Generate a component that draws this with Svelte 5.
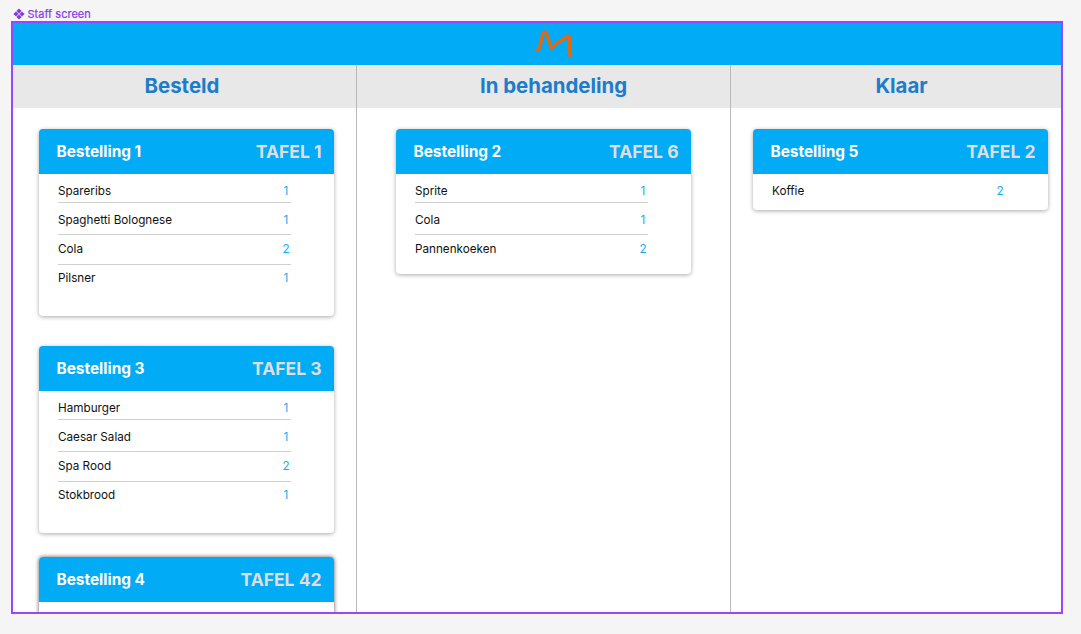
<script>
  const columns = [
    {
      title: 'Besteld',
      orders: [
        { id: 1, table: 1, height: 187, items: [['Spareribs', 1], ['Spaghetti Bolognese', 1], ['Cola', 2], ['Pilsner', 1]] },
        { id: 3, table: 3, height: 187, items: [['Hamburger', 1], ['Caesar Salad', 1], ['Spa Rood', 2], ['Stokbrood', 1]] },
        { id: 4, table: 42, height: 187, items: [], raised: true }
      ]
    },
    {
      title: 'In behandeling',
      orders: [{ id: 2, table: 6, height: 145, items: [['Sprite', 1], ['Cola', 1], ['Pannenkoeken', 2]] }]
    },
    {
      title: 'Klaar',
      orders: [{ id: 5, table: 2, height: 81, items: [['Koffie', 2]] }]
    }
  ];
</script>

<main>
  <div class="label">
    <svg width="12" height="12" viewBox="0 0 12 12" aria-hidden="true">
      <path d="M6 .4 8.6 3 6 5.6 3.4 3zM9 3.4 11.6 6 9 8.6 6.4 6zM6 6.4 8.6 9 6 11.6 3.4 9zM3 3.4 5.6 6 3 8.6.4 6z" fill="#8638e5" />
    </svg>
    <span>Staff screen</span>
  </div>
  <div class="screen">
    <header>
      <svg width="40" height="30" viewBox="0 0 40 30" aria-hidden="true">
        <path d="M2.2 22.5Q4.2 22.4 4.9 21Q7.4 15 8.2 8Q9 3.6 10.8 3.8Q12.4 4 13.2 7.5Q14.4 11 15.8 15L17.5 20.2Q20 18 23.6 14.9Q29 11.5 33.2 8.4Q35.6 7 35.6 10.7Q35 16 35.5 20.7L36 27.8" fill="none" stroke="#eb6608" stroke-width="3.2" stroke-linecap="round" stroke-linejoin="round" />
      </svg>
    </header>
    <div class="board">
      {#each columns as column}
        <section>
          <h2>{column.title}</h2>
          <div class="orders">
            {#each column.orders as order}
              <article class:raised={order.raised} style:height="{order.height}px">
                <h3><span>Bestelling {order.id}</span><strong>TAFEL {order.table}</strong></h3>
                <ul>
                  {#each order.items as [name, count]}
                    <li><span>{name}</span><b>{count}</b></li>
                  {/each}
                </ul>
              </article>
            {/each}
          </div>
        </section>
      {/each}
    </div>
  </div>
</main>

<style>
  :global(body) { margin: 0; background: #f5f5f5; }
  main {
    box-sizing: border-box;
    width: 1081px;
    height: 634px;
    padding: 7px 18px 20px 11px;
    overflow: hidden;
    background: #f5f5f5;
    font-family: Inter, sans-serif;
  }
  .label {
    display: flex;
    align-items: center;
    gap: 2.5px;
    height: 14px;
    padding-left: 2px;
    color: #8638e5;
    font-size: 11px;
    letter-spacing: .02px;
    -webkit-text-stroke: .2px #8638e5;
  }
  .screen {
    box-sizing: border-box;
    width: 1052px;
    height: 593px;
    border: 2px solid #9747ff;
    background: #fff;
    overflow: hidden;
  }
  header {
    display: flex;
    justify-content: center;
    height: 42.4px;
    padding: 5px 0 0 34px;
    box-sizing: border-box;
    background: #02abf6;
  }
  .board {
    display: grid;
    grid-template-columns: 344px 374px 1fr;
    height: 547px;
  }
  section { box-sizing: border-box; border-right: 1px solid #b9b9b9; }
  section:last-child { border-right: 0; }
  h2 {
    box-sizing: border-box;
    height: 42.6px;
    margin: 0;
    padding-right: 5px;
    background: #e8e8e8;
    color: #1b7dcb;
    font-size: 20.4px;
    line-height: 42px;
    text-align: center;
  }
  section:nth-child(2) h2 { padding: 0 0 0 20px; }
  section:nth-child(3) h2 { padding: 0 0 0 11px; }
  .orders {
    display: flex;
    flex-direction: column;
    gap: 30px;
    padding: 21px 0 0 26px;
  }
  section:nth-child(2) .orders { padding-left: 39px; }
  section:nth-child(3) .orders { padding-left: 22px; }
  article {
    flex: none;
    width: 295px;
    border-radius: 4px;
    background: #fff;
    box-shadow: 0 1px 4px rgba(0, 0, 0, .34);
  }
  .raised { margin-top: -6px; box-shadow: 0 0 4px rgba(0, 0, 0, .65); }
  h3 {
    display: flex;
    align-items: center;
    justify-content: space-between;
    box-sizing: border-box;
    height: 45.4px;
    margin: 0;
    padding: 0 12.5px 0 17.5px;
    border-radius: 4px 4px 0 0;
    background: #02abf6;
    color: #fff;
    font-size: 15.4px;
  }
  h3 strong { padding-bottom: 1px; color: #dedede; font-size: 17.5px; font-weight: 700; }
  ul { margin: 0; padding: 0 43px 0 19px; list-style: none; }
  li {
    display: flex;
    align-items: center;
    justify-content: space-between;
    box-sizing: border-box;
    height: 30px;
    padding-right: 1px;
    border-bottom: 1px solid #cfcfcf;
    color: #111;
    font-size: 11.7px;
  }
  li:first-child { height: 28.5px; padding-top: 5px; }
  li:nth-child(2) { height: 32px; padding-top: 3px; }
  li:nth-child(4) { padding-bottom: 3px; }
  li:last-child { border-bottom-color: transparent; }
  b { width: 8px; color: #16adef; font-weight: 400; text-align: center; }
</style>
